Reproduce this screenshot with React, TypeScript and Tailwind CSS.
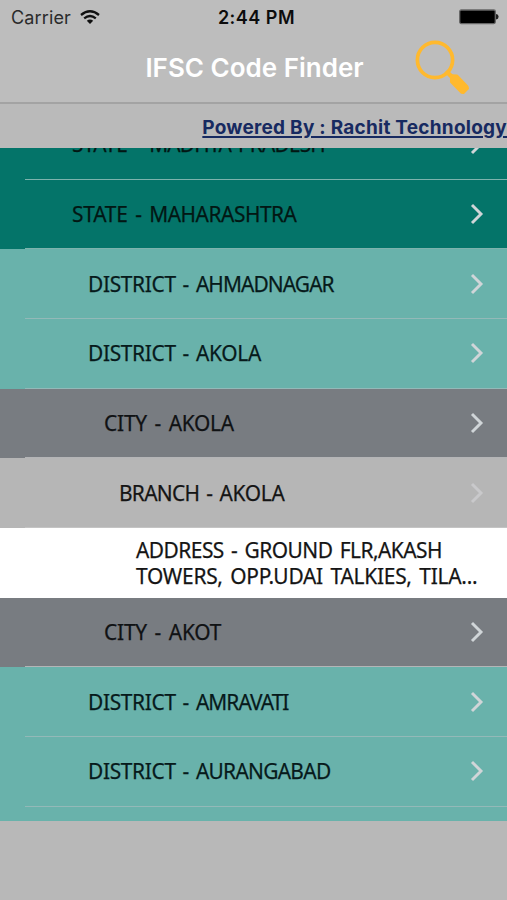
import clsx from "clsx";

type Row = {
  prefix: string;
  name: string;
  level: "state" | "district" | "city" | "branch";
  tracking: string;
};

const rowsAbove: Row[] = [
  { prefix: "STATE", name: "MADHYA PRADESH", level: "state", tracking: "tracking-[-0.9px]" },
  { prefix: "STATE", name: "MAHARASHTRA", level: "state", tracking: "tracking-[-0.5px]" },
  { prefix: "DISTRICT", name: "AHMADNAGAR", level: "district", tracking: "tracking-[-0.95px]" },
  { prefix: "DISTRICT", name: "AKOLA", level: "district", tracking: "tracking-[-0.3px]" },
  { prefix: "CITY", name: "AKOLA", level: "city", tracking: "tracking-[-0.3px]" },
  { prefix: "BRANCH", name: "AKOLA", level: "branch", tracking: "tracking-[-0.3px]" },
];

const rowsBelow: Row[] = [
  { prefix: "CITY", name: "AKOT", level: "city", tracking: "tracking-[-0.2px]" },
  { prefix: "DISTRICT", name: "AMRAVATI", level: "district", tracking: "tracking-[-1px]" },
  { prefix: "DISTRICT", name: "AURANGABAD", level: "district", tracking: "tracking-[-0.75px]" },
];

const levelStyles = {
  state: "bg-[#047469] pl-[71.8px] text-[#021714]",
  district: "bg-[#69b2ab] pl-[87.6px] text-[#071a1b]",
  city: "bg-[#787c81] pl-[103.7px] text-[#101214]",
  branch: "bg-[#b6b6b6] pl-[119.3px] text-[#151515]",
};

const prefixStyles = {
  state: "tracking-[-0.25px]",
  district: "tracking-[-0.35px] [word-spacing:1.9px]",
  city: "tracking-[-0.2px]",
  branch: "tracking-[-0.75px]",
};

const lineStyles = {
  state: "bg-[#7db3ad]",
  district: "bg-[#93b9b8]",
  city: "bg-[#b4b5b7]",
  branch: "bg-[#c4c4c4]",
};

function Chevron({ faint }: { faint?: boolean }) {
  return (
    <svg
      className={clsx("mb-[1px] h-[22px] w-[14px]", faint ? "text-[#c9c9cb]" : "text-[#d0d5d8]")}
      viewBox="0 0 14 22"
      fill="none"
      stroke="currentColor"
      strokeWidth="2.9"
    >
      <path d="M2 2 L11 11 L2 20" />
    </svg>
  );
}

function ListRow({ row }: { row: Row }) {
  return (
    <div
      className={clsx(
        "relative flex h-[69.67px] shrink-0 items-center justify-between pr-[23px]",
        levelStyles[row.level]
      )}
    >
      <span className="mb-[3px] origin-left scale-x-95 text-[22px] leading-[26px] whitespace-nowrap [word-spacing:2.5px] [-webkit-text-stroke:0.25px_currentColor]">
        <span className={prefixStyles[row.level]}>{row.prefix} - </span>
        <span className={row.tracking}>{row.name}</span>
      </span>
      <Chevron faint={row.level === "branch"} />
      <div className={clsx("absolute right-0 bottom-0 left-[25px] h-px", lineStyles[row.level])} />
    </div>
  );
}

function StatusBar() {
  return (
    <div className="grid h-[34px] grid-cols-3 items-center pr-[8px] pl-[11px]">
      <div className="flex items-center gap-[9px]">
        <span className="text-[18px] tracking-[0.15px] text-[#2b2b2b]">Carrier</span>
        <svg className="h-[14px] w-[20px]" viewBox="0 0 20 14" fill="none" stroke="#111" strokeWidth="2.3">
          <path d="M1 5 Q10 -2.4 19 5" />
          <path d="M4.2 8.3 Q10 3.6 15.8 8.3" />
          <path d="M6.8 10.7 Q10 8.2 13.2 10.7 L10 13.9 Z" fill="#111" stroke="none" />
        </svg>
      </div>
      <span className="pl-[3px] text-center text-[18px] font-semibold tracking-[0.5px] whitespace-nowrap text-[#0c0c0c]">
        2:44 PM
      </span>
      <svg className="h-[16px] w-[40px] justify-self-end" viewBox="0 0 40 16">
        <rect x="0.7" y="1" width="35.6" height="13.6" rx="1.5" fill="#000" stroke="#666" strokeWidth="1.3" />
        <path d="M37 5 Q39.6 5.3 39.6 7.8 Q39.6 10.3 37 10.6 Z" fill="#222" />
      </svg>
    </div>
  );
}

function NavBar() {
  return (
    <div className="relative flex h-[70px] items-center justify-center border-b-2 border-[#a3a3a3] pb-[2px] pl-[2px]">
      <h1 className="text-[26px] font-semibold whitespace-nowrap text-white">IFSC Code Finder</h1>
      <svg className="absolute top-[5px] left-[414px] h-[58px] w-[58px]" viewBox="0 0 58 58">
        <circle cx="21" cy="21" r="17.6" fill="none" stroke="#ffb92e" strokeWidth="3.7" />
        <path d="M32 32 L39 39" stroke="#ffb92e" strokeWidth="4.5" />
        <path
          d="M37 37 L38 36.3 L43 36.5 L53.5 47.5 L54 49.5 L49.5 54 L47.5 53.8 L37 43 Z"
          fill="#ffb92e"
          stroke="#ffb92e"
          strokeWidth="2"
          strokeLinejoin="round"
        />
      </svg>
    </div>
  );
}

export default function App() {
  return (
    <div className="flex h-[900px] w-[507px] flex-col overflow-hidden bg-[#b8b8b8] font-['Inter',sans-serif]">
      <header className="bg-[#bdbdbd]">
        <StatusBar />
        <NavBar />
      </header>
      <div className="flex h-[44px] items-center justify-end bg-[#bababa] pt-[4px]">
        <a className="text-[19px] leading-[24px] font-bold tracking-[0.24px] whitespace-nowrap text-[#172a61] underline decoration-2 underline-offset-2">
          Powered By : Rachit Technology
        </a>
      </div>
      <main className="flex h-[673px] flex-col overflow-hidden bg-[#69b2ab] font-['Noto_Sans',sans-serif]">
        <div className="-mt-[38px] flex flex-col">
          {rowsAbove.map((row) => (
            <ListRow key={row.prefix + row.name} row={row} />
          ))}
          <div className="flex h-[69.67px] flex-col justify-center bg-white pl-[135.5px] text-[22px] leading-[25.5px] whitespace-nowrap text-[#151515] [word-spacing:2.5px] [-webkit-text-stroke:0.25px_currentColor]">
            <span className="origin-left scale-x-95 tracking-[-0.55px]">ADDRESS - GROUND FLR,AKASH</span>
            <span className="origin-left scale-x-95 tracking-[-0.26px]">TOWERS, OPP.UDAI TALKIES, TILA...</span>
          </div>
          {rowsBelow.map((row) => (
            <ListRow key={row.prefix + row.name} row={row} />
          ))}
        </div>
      </main>
    </div>
  );
}
